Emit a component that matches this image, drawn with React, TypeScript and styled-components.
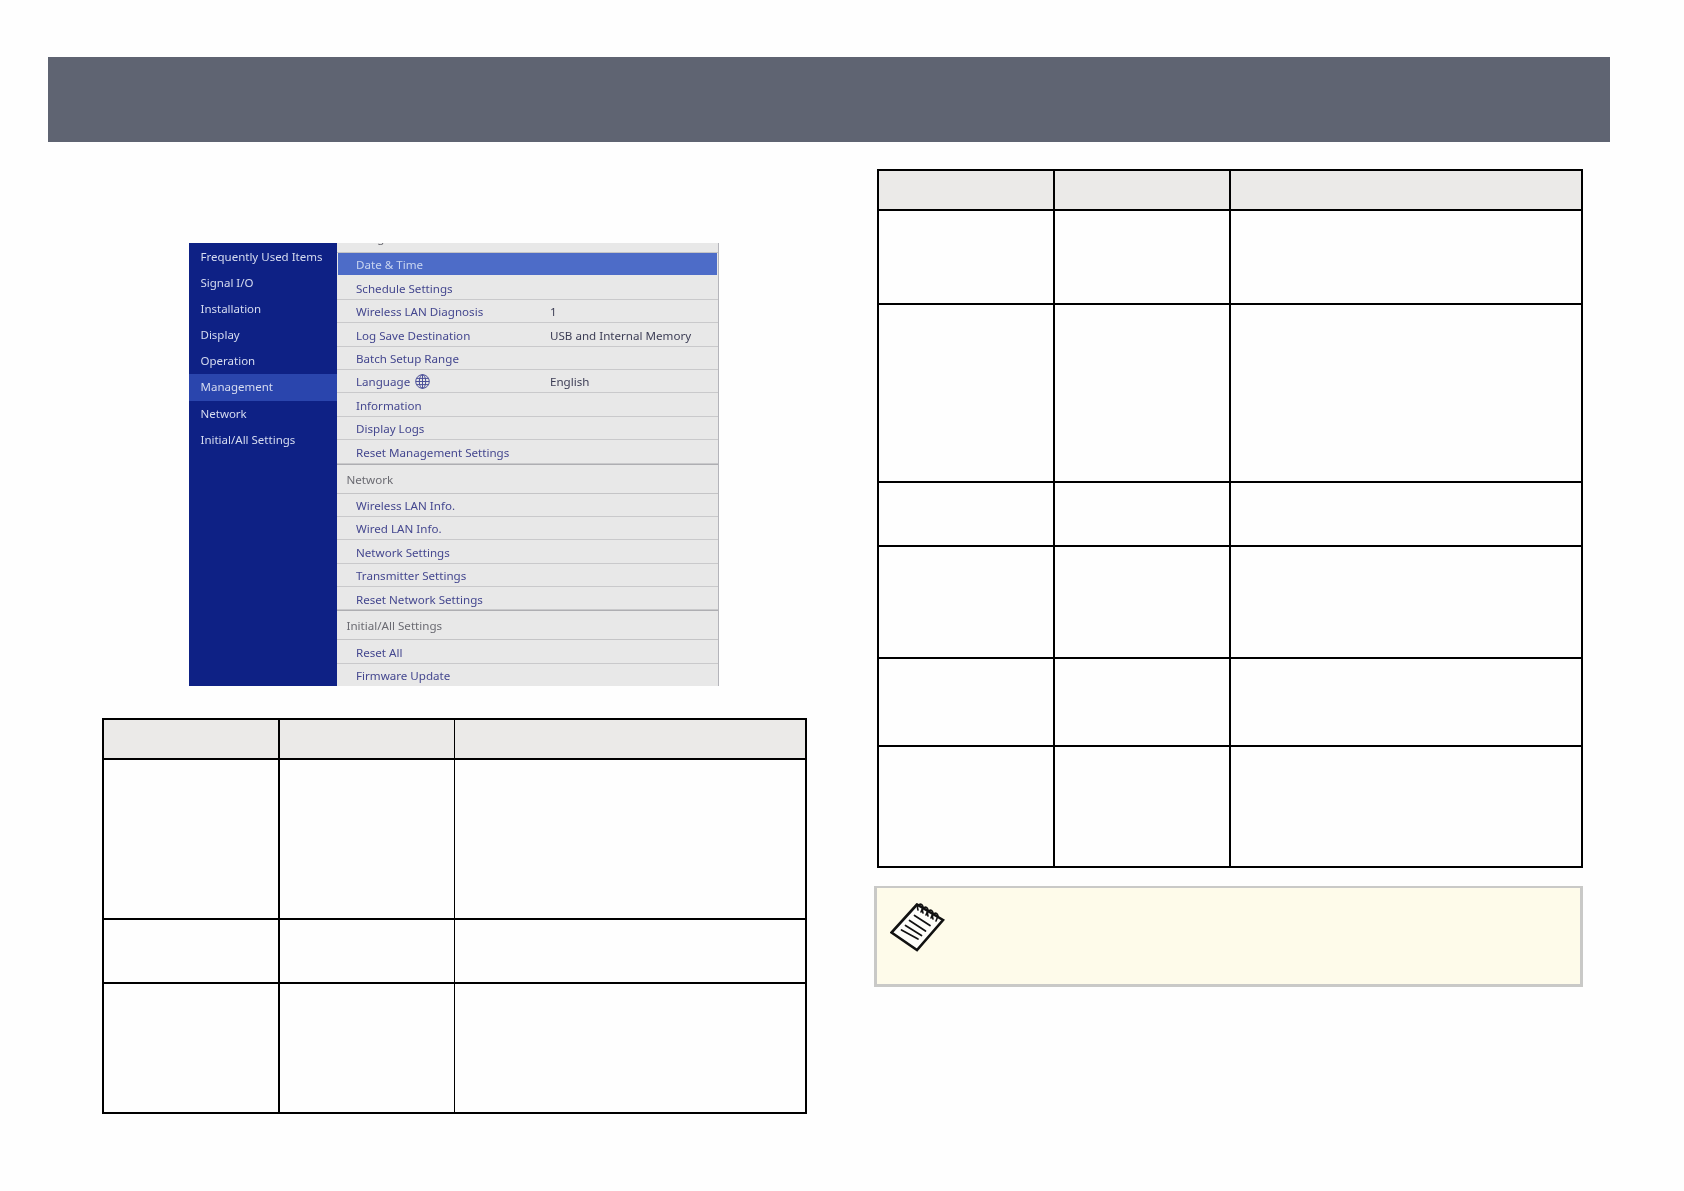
import styled, { createGlobalStyle } from "styled-components"

const GlobalStyle = createGlobalStyle`
  html, body {
    margin: 0;
    padding: 0;
    background: #fefefe;
  }
  * {
    box-sizing: border-box;
  }
`

const Page = styled.div`
  width: 1684px;
  height: 1191px;
  padding-top: 57px;
  overflow: hidden;
  font-family: "Noto Sans", sans-serif;
`
const TopBar = styled.div`
  width: 1562px;
  height: 85px;
  margin-left: 48px;
  background-color: #5f6472;
`
const Columns = styled.div`
  display: flex;
  gap: 69px;
  margin: 27px 0 0 102px;
`
const LeftColumn = styled.div`
  width: 706px;
  padding-top: 74px;
`
const RightColumn = styled.div`
  width: 706px;
`
const MenuShot = styled.div`
  display: flex;
  width: 530px;
  height: 443px;
  margin: 0 0 32px 86.5px;
  overflow: hidden;
  filter: blur(0.45px);
`
const Sidebar = styled.div`
  width: 148px;
  flex-shrink: 0;
  background-color: #0e2185;
  padding-top: 0.5px;
`
const SideItem = styled.div<{ $active?: boolean }>`
  height: 26.2px;
  line-height: 26.2px;
  padding-left: 12px;
  font-size: 11.5px;
  color: #d6dcf0;
  background-color: ${props => props.$active ? "#2a45ad" : "transparent"};
`
const Menu = styled.div`
  flex: 1;
  background-color: #e8e8e8;
  border-right: 1px solid #b4b4ba;
  overflow: hidden;
`
const SectionHead = styled.div<{ $first?: boolean }>`
  height: 30px;
  margin-top: ${props => props.$first ? "-20px" : "0"};
  padding-left: 10px;
  line-height: 29px;
  font-size: 11.6px;
  color: #6b6b72;
  border-bottom: 1px solid #c4c4c6;
  border-top: ${props => props.$first ? "none" : "1px solid #aeaeb2"};
`
const MenuRow = styled.div<{ $selected?: boolean }>`
  display: flex;
  align-items: center;
  height: 23.4px;
  padding: ${props => props.$selected ? "0 0 0 18.5px" : "1.5px 0 0 19.5px"};
  font-size: 11.6px;
  color: ${props => props.$selected ? "#c9d5f0" : "#44478f"};
  background-color: ${props => props.$selected ? "#4d6cc8" : "transparent"};
  border-bottom: 1px solid ${props => props.$selected ? "#e8e8e8" : "#c9c9cb"};
  margin: ${props => props.$selected ? "0 1px" : "0"};
`
const RowLabel = styled.span`
  display: flex;
  align-items: center;
  gap: 5px;
  width: 194px;
`
const RowValue = styled.span`
  color: #3c3d55;
`
const Table = styled.div`
  width: fit-content;
  border-top: 2px solid #000;
  border-left: 2px solid #000;
`
const TableRow = styled.div<{ $height: number; $columns: string }>`
  display: grid;
  grid-template-columns: ${props => props.$columns};
  height: ${props => props.$height}px;
`
const Cell = styled.div<{ $head?: boolean; $thin?: boolean }>`
  background-color: ${props => props.$head ? "#ebeae8" : "transparent"};
  border-bottom: 2px solid #000;
  border-right: ${props => props.$thin ? "1px" : "2px"} solid #000;
`
const NoteBox = styled.div`
  display: flex;
  height: 101px;
  margin: 18px 0 0 -3px;
  width: 709px;
  padding: 15px 0 0 13px;
  background-color: #fefbea;
  border: 3px solid #c9c9c7;
  border-top-width: 2px;
`

const sideItems = ["Frequently Used Items", "Signal I/O", "Installation", "Display", "Operation", "Management", "Network", "Initial/All Settings"]

const managementRows = [
  { label: "Date & Time", selected: true },
  { label: "Schedule Settings" },
  { label: "Wireless LAN Diagnosis", value: "1" },
  { label: "Log Save Destination", value: "USB and Internal Memory" },
  { label: "Batch Setup Range" },
  { label: "Language", value: "English", globe: true },
  { label: "Information" },
  { label: "Display Logs" },
  { label: "Reset Management Settings" },
]
const networkRows = ["Wireless LAN Info.", "Wired LAN Info.", "Network Settings", "Transmitter Settings", "Reset Network Settings"]
const initialRows = ["Reset All", "Firmware Update"]

const leftRows = [40, 160, 64, 130]
const rightRows = [40, 94, 178, 64, 112, 88, 121]

function GlobeIcon() {
  return (
    <svg width="15" height="15" viewBox="0 0 15 15" fill="none" stroke="#4a4f98" strokeWidth="1">
      <circle cx="7.5" cy="7.5" r="6.8" />
      <ellipse cx="7.5" cy="7.5" rx="3.2" ry="6.8" />
      <path d="M7.5 .7v13.6M.7 7.5h13.6M1.6 4.4h11.8M1.6 10.6h11.8" />
    </svg>
  )
}

function NoteIcon() {
  return (
    <svg width="56" height="50" viewBox="0 0 56 50" fill="none" stroke="#111" strokeLinecap="round">
      <path d="M27 1.5 L1.5 29.5 L27 47 L53 17 Z" fill="#fefefa" strokeWidth="2.6" strokeLinejoin="miter" />
      <path d="M24.5 12.5 L40 22.5 M19.5 17.5 L35.5 28 M15.5 22.5 L31.5 32.5 M11.5 27 L28 36" strokeWidth="1.7" />
      <path d="M28 7 C26 1 32 -1 33 4 L31 9 M33 10 C31 4 37 2 38 7 L36 12 M38 13 C36 7 42 5 43 10 L41 15 M43 16 C41 10 47 8 48 13 L46 18" strokeWidth="1.6" />
    </svg>
  )
}

export default function App() {
  const leftColumns = "176px 175px 352px"
  const rightColumns = "176px 176px 352px"
  return (
    <Page>
      <GlobalStyle />
      <TopBar />
      <Columns>
        <LeftColumn>
          <MenuShot>
            <Sidebar>
              {sideItems.map(item => (
                <SideItem key={item} $active={item === "Management"}>{item}</SideItem>
              ))}
            </Sidebar>
            <Menu>
              <SectionHead $first>Management</SectionHead>
              {managementRows.map(row => (
                <MenuRow key={row.label} $selected={row.selected}>
                  <RowLabel>{row.label}{row.globe && <GlobeIcon />}</RowLabel>
                  {row.value && <RowValue>{row.value}</RowValue>}
                </MenuRow>
              ))}
              <SectionHead>Network</SectionHead>
              {networkRows.map(row => (
                <MenuRow key={row}><RowLabel>{row}</RowLabel></MenuRow>
              ))}
              <SectionHead>Initial/All Settings</SectionHead>
              {initialRows.map(row => (
                <MenuRow key={row}><RowLabel>{row}</RowLabel></MenuRow>
              ))}
            </Menu>
          </MenuShot>
          <Table>
            {leftRows.map((height, i) => (
              <TableRow key={i} $height={height} $columns={leftColumns}>
                <Cell $head={i === 0} />
                <Cell $head={i === 0} $thin />
                <Cell $head={i === 0} />
              </TableRow>
            ))}
          </Table>
        </LeftColumn>
        <RightColumn>
          <Table>
            {rightRows.map((height, i) => (
              <TableRow key={i} $height={height} $columns={rightColumns}>
                <Cell $head={i === 0} />
                <Cell $head={i === 0} />
                <Cell $head={i === 0} />
              </TableRow>
            ))}
          </Table>
          <NoteBox>
            <NoteIcon />
          </NoteBox>
        </RightColumn>
      </Columns>
    </Page>
  )
}
